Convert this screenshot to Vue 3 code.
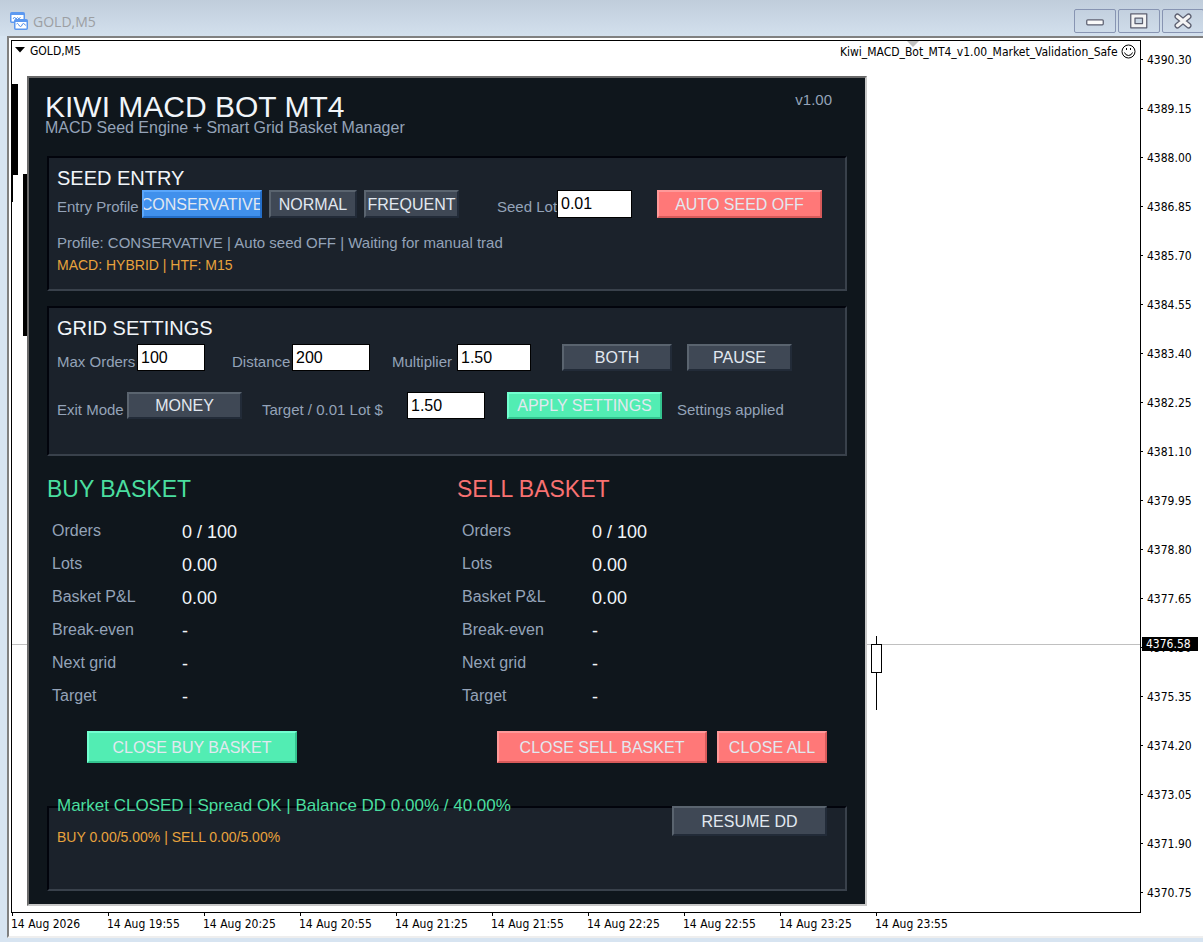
<script setup>
import { ref } from 'vue'

const prices = [
  '4390.30', '4389.15', '4388.00', '4386.85', '4385.70', '4384.55',
  '4383.40', '4382.25', '4381.10', '4379.95', '4378.80', '4377.65',
  '4376.50', '4375.35', '4374.20', '4373.05', '4371.90', '4370.75',
]
const times = [
  '14 Aug 2026', '14 Aug 19:55', '14 Aug 20:25', '14 Aug 20:55', '14 Aug 21:25',
  '14 Aug 21:55', '14 Aug 22:25', '14 Aug 22:55', '14 Aug 23:25', '14 Aug 23:55',
]
const stats = [
  ['Orders', '0 / 100'],
  ['Lots', '0.00'],
  ['Basket P&L', '0.00'],
  ['Break-even', '-'],
  ['Next grid', '-'],
  ['Target', '-'],
]
const seedLot = ref('0.01')
const maxOrders = ref('100')
const distance = ref('200')
const multiplier = ref('1.50')
const target = ref('1.50')
</script>

<template>
  <div class="window">
    <header class="titlebar">
      <svg class="app-icon" width="18" height="18" viewBox="0 0 18 18" aria-hidden="true">
        <rect x="0.75" y="0.75" width="13.500" height="9.500" rx="1" fill="#fff" stroke="#5b98f0" stroke-width="1.500" />
        <path d="M1 1h13v2H1z" fill="#5b98f0" />
        <path d="M3 7l1.500-2L6 7l1.500-1.500L9 7l1.500-2" fill="none" stroke="#5b98f0" />
        <rect x="4.75" y="7.75" width="12.500" height="9.500" rx="1" fill="#fff" stroke="#5b98f0" stroke-width="1.500" />
        <path d="M5 8h12v2H5z" fill="#5b98f0" />
        <path d="M6.500 12q1-1.500 2 .5t2 2q1 0 1.500-1.500t1.500-1.500q1 0 2 2" fill="none" stroke="#4f8ce8" />
      </svg>
      <span class="title">GOLD,M5</span>
      <div class="controls">
        <button type="button" aria-label="Minimize">
          <svg width="18" height="16" viewBox="0 0 18 16"><rect x="0.75" y="6.75" width="16.500" height="5" rx="1" fill="#fafafa" stroke="#5c5f70" stroke-width="1.250" /></svg>
        </button>
        <button type="button" aria-label="Maximize">
          <svg width="18" height="16" viewBox="0 0 18 16"><path d="M.75.75h16v14h-16zM5 5v5.500h7.500V5z" fill="#f4f4f4" fill-rule="evenodd" stroke="#5c5f70" stroke-width="1.250" stroke-linejoin="round" /></svg>
        </button>
        <button type="button" aria-label="Close">
          <svg width="18" height="16" viewBox="0 0 18 16" fill="none" stroke-linecap="round">
            <path d="M3.500 3.500l11 9M14.500 3.500l-11 9" stroke="#5c5f70" stroke-width="6" />
            <path d="M3.500 3.500l11 9M14.500 3.500l-11 9" stroke="#f4f4f4" stroke-width="3.500" />
          </svg>
        </button>
      </div>
    </header>

    <div class="frame">
      <div class="plot">
        <svg class="candles" aria-hidden="true">
          <path d="M0 603.500H1128" stroke="#c0c0c0" />
          <path d="M0 43h6v91H0zM0 134h1v27H0zM11 133h11v162H11z" fill="#000" />
          <path d="M864.500 595v74" stroke="#000" />
          <rect x="859.500" y="603.500" width="10" height="28" fill="#fff" stroke="#000" />
          <path d="M895 0h12l-6 6z" fill="#c0c0c0" />
        </svg>
        <div class="plot-head">
          <span class="symbol"><svg width="10" height="6" viewBox="0 0 10 6" aria-hidden="true"><path d="M0 0h10L5 5.500z" /></svg>GOLD,M5</span>
          <span class="expert">Kiwi_MACD_Bot_MT4_v1.00_Market_Validation_Safe
            <svg width="15" height="15" viewBox="0 0 15 15" aria-hidden="true">
              <circle cx="7.500" cy="7.500" r="6.500" fill="none" stroke="#000" />
              <path d="M5 4h1v2H5zM9 4h1v2H9z" />
              <path d="M3.500 8.500q1 3 4 3t4-3" fill="none" stroke="#000" />
            </svg>
          </span>
        </div>

        <main class="panel">
          <div class="panel-head">
            <div>
              <h1>KIWI MACD BOT MT4</h1>
              <p class="subtitle">MACD Seed Engine + Smart Grid Basket Manager</p>
            </div>
            <span class="version">v1.00</span>
          </div>

          <section class="box seed">
            <h2>SEED ENTRY</h2>
            <div class="row seed-row">
              <span class="label">Entry Profile</span>
              <div class="profiles">
                <button type="button" class="btn blue"><span>CONSERVATIVE</span></button>
                <button type="button" class="btn"><span>NORMAL</span></button>
                <button type="button" class="btn"><span>FREQUENT</span></button>
              </div>
              <label class="label" for="seed-lot">Seed Lot</label>
              <input id="seed-lot" v-model="seedLot" type="text" />
              <button type="button" class="btn red last"><span>AUTO SEED OFF</span></button>
            </div>
            <p class="note muted">Profile: CONSERVATIVE | Auto seed OFF | Waiting for manual trad</p>
            <p class="note amber">MACD: HYBRID | HTF: M15</p>
          </section>

          <section class="box grid-settings">
            <h2>GRID SETTINGS</h2>
            <div class="row orders-row">
              <label class="label" for="max-orders">Max Orders</label>
              <input id="max-orders" v-model="maxOrders" type="text" />
              <label class="label next" for="distance">Distance</label>
              <input id="distance" v-model="distance" type="text" />
              <label class="label next" for="multiplier">Multiplier</label>
              <input id="multiplier" v-model="multiplier" type="text" />
              <button type="button" class="btn both"><span>BOTH</span></button>
              <button type="button" class="btn pause"><span>PAUSE</span></button>
            </div>
            <div class="row exit-row">
              <span class="label">Exit Mode</span>
              <button type="button" class="btn"><span>MONEY</span></button>
              <label class="label target" for="target">Target / 0.01 Lot $</label>
              <input id="target" v-model="target" type="text" />
              <button type="button" class="btn green apply"><span>APPLY SETTINGS</span></button>
              <span class="label applied">Settings applied</span>
            </div>
          </section>

          <div class="baskets">
            <section>
              <h3 class="buy">BUY BASKET</h3>
              <dl>
                <div v-for="[name, value] in stats" :key="name"><dt>{{ name }}</dt><dd>{{ value }}</dd></div>
              </dl>
              <div class="actions">
                <button type="button" class="btn green"><span>CLOSE BUY BASKET</span></button>
              </div>
            </section>
            <section>
              <h3 class="sell">SELL BASKET</h3>
              <dl>
                <div v-for="[name, value] in stats" :key="name"><dt>{{ name }}</dt><dd>{{ value }}</dd></div>
              </dl>
              <div class="actions">
                <button type="button" class="btn red"><span>CLOSE SELL BASKET</span></button>
                <button type="button" class="btn red"><span>CLOSE ALL</span></button>
              </div>
            </section>
          </div>

          <section class="box status">
            <p class="market">Market CLOSED | Spread OK | Balance DD 0.00% / 40.00%</p>
            <p class="note amber">BUY 0.00/5.00% | SELL 0.00/5.00%</p>
            <button type="button" class="btn resume"><span>RESUME DD</span></button>
          </section>
        </main>
      </div>

      <div class="price-axis">
        <span v-for="p in prices" :key="p">{{ p }}</span>
        <strong class="price-tag">4376.58</strong>
      </div>
      <div class="time-axis">
        <span v-for="t in times" :key="t">{{ t }}</span>
      </div>
    </div>
  </div>
</template>

<style>
body {
  margin: 0;
  background: #d7e4f1;
}
</style>

<style scoped>
* {
  box-sizing: border-box;
}
h1, h2, h3, p, dl, dd {
  margin: 0;
  font-weight: 400;
}
.window {
  min-height: 100vh;
  overflow: hidden;
  padding: 0 0 4px 7px;
  background: #d7e4f1;
  font-family: "DejaVu Sans Condensed", "DejaVu Sans", "Noto Sans", sans-serif;
  font-size: 12px;
  color: #000;
}
.titlebar {
  display: flex;
  align-items: center;
  height: 36px;
  margin-left: -7px;
  padding: 6px 0 0 10px;
  background: linear-gradient(#c0cddb, #d3e0ed);
}
.title {
  flex: 1;
  margin-left: 5px;
  font-family: "Open Sans", "Noto Sans", sans-serif;
  font-size: 14px;
  color: #9c9fa3;
}
.controls {
  display: flex;
  gap: 2px;
  margin-right: -1px;
}
.controls button {
  display: grid;
  place-items: center;
  width: 42px;
  height: 24px;
  padding: 0;
  border: 1px solid #8794b2;
  border-radius: 2px;
  background: linear-gradient(#c3d0df, #cedbe9);
}
.frame {
  display: grid;
  grid-template-columns: 1fr 62px;
  padding: 2px 0 0 2px;
  border: 2px solid #808080;
  border-right: 0;
  border-bottom: 2px solid #eee;
  background: #fff;
}
.plot {
  position: relative;
  padding: 0 0 6px 15px;
  border: 1px solid #000;
}
.candles {
  position: absolute;
  inset: 0;
  width: 100%;
  height: 100%;
}
.plot-head {
  position: relative;
  display: flex;
  justify-content: space-between;
  height: 35px;
  margin-left: -12px;
  padding: 2px 4px 0 0;
  line-height: 16px;
}
.symbol svg {
  margin-right: 5px;
  vertical-align: 2px;
}
.expert {
  padding-top: 1px;
}
.expert svg {
  vertical-align: -3px;
}
.panel {
  position: relative;
  max-width: 840px;
  padding: 18px 18px 13px;
  border: 2px solid;
  border-color: #696969 #c8c8c8 #c8c8c8 #696969;
  background: #0f161c;
  font-family: "Liberation Sans", Arial, sans-serif;
  font-size: 15px;
  color: #94a3b8;
}
.panel-head {
  display: flex;
  justify-content: space-between;
  height: 60px;
  padding: 0 15px 0 0;
  margin-left: -2px;
}
h1 {
  margin-bottom: 1px;
  font-size: 30px;
  line-height: 22px;
  color: #f1f5f9;
}
.subtitle {
  font-size: 16px;
  line-height: 18px;
}
.version {
  line-height: 8px;
}
.box {
  position: relative;
  padding: 9px 8px 13px;
  border: 2px solid;
  border-color: #02040c #39414b #39414b #02040c;
  background: #1b222b;
}
h2 {
  margin-bottom: 1px;
  font-size: 20px;
  line-height: 22px;
  color: #f1f5f9;
}
.row {
  display: flex;
  white-space: nowrap;
}
.seed-row {
  height: 28px;
}
.label {
  padding-top: 8px;
  line-height: 20px;
}
.seed-row .label {
  padding-top: 7px;
}
.seed-row > .label:first-child {
  width: 85px;
}
.profiles {
  display: grid;
  grid-template-columns: 120px 88px 95px;
  gap: 7px;
  margin-right: 38px;
}
.seed-row label {
  width: 60px;
}
#seed-lot {
  width: 75px;
}
.seed-row .last {
  width: 165px;
  margin-left: 25px;
}
.btn {
  display: flex;
  align-items: center;
  justify-content: center;
  overflow: hidden;
  padding: 1px 0 0;
  border: 2px solid;
  border-color: #5a646f #222b38 #222b38 #5a646f;
  background: #3f4855;
  font-family: inherit;
  font-size: 16px;
  white-space: nowrap;
  color: #e2e8f0;
}
.blue {
  border-color: #5aa6fb #246fca #246fca #5aa6fb;
  background: #4090ec;
}
.red {
  border-color: #ff9999 #d85a5a #d85a5a #ff9999;
  background: #ff7878;
}
.green {
  border-color: #72ffd0 #34c48f #34c48f #72ffd0;
  background: #52edb3;
}
input {
  min-width: 0;
  padding: 0 3px;
  border: 1px solid #000;
  border-radius: 0;
  background: #fff;
  font-family: inherit;
  font-size: 16px;
  color: #000;
}
.note {
  line-height: 22px;
}
.note.muted {
  margin-top: 14px;
}
.amber {
  font-size: 14px;
  color: #e8a33d;
}
.grid-settings {
  margin-top: 15px;
  padding-bottom: 35px;
}
.orders-row {
  height: 27px;
  margin-top: 4px;
}
.grid-settings h2 {
  margin-bottom: 5px;
}
.grid-settings .orders-row {
  margin-top: 0;
}
.orders-row .label:first-child {
  width: 80px;
}
#max-orders {
  width: 68px;
}
.orders-row .next {
  width: 60px;
  margin-left: 27px;
}
#distance, #target {
  width: 78px;
}
.orders-row .next[for="multiplier"] {
  width: 65px;
  margin-left: 22px;
}
#multiplier {
  width: 74px;
}
.both {
  width: 110px;
  margin-left: 31px;
}
.pause {
  width: 105px;
  margin-left: 15px;
}
.exit-row {
  height: 27px;
  margin-top: 21px;
}
.exit-row .label:first-child {
  width: 70px;
}
.exit-row .btn {
  width: 115px;
}
.exit-row .target {
  width: 145px;
  margin-left: 20px;
}
.exit-row .apply {
  width: 155px;
  margin-left: 22px;
}
.applied {
  margin-left: 15px;
}
.baskets {
  display: grid;
  grid-template-columns: 1fr 1fr;
  gap: 20px;
  margin-top: 20px;
}
h3 {
  font-size: 23px;
  line-height: 26px;
}
.buy {
  color: #4ade9f;
}
.sell {
  color: #f87171;
}
dl {
  margin: 12px 0 19px 5px;
}
dl div {
  display: grid;
  grid-template-columns: 130px 1fr;
  line-height: 33px;
}
dt {
  font-size: 16px;
}
dd {
  padding-top: 2px;
  height: 33px;
  font-size: 18px;
  color: #f1f5f9;
}
.actions {
  display: grid;
  grid-template-columns: 210px 110px;
  gap: 10px;
  height: 32px;
  margin-left: 40px;
}
.status {
  height: 85px;
  margin-top: 43px;
}
.market {
  margin-top: -21px;
  font-size: 17px;
  line-height: 20px;
  color: #4ade9f;
}
.status .note {
  margin-top: 10px;
}
.resume {
  position: absolute;
  top: -2px;
  right: 18px;
  width: 155px;
  height: 30px;
}
.price-axis {
  position: relative;
  margin: -5px 0;
}
.price-axis span {
  display: flex;
  align-items: center;
  gap: 4px;
  height: 49px;
}
.price-axis span::before {
  content: "";
  width: 2px;
  height: 1px;
  background: #000;
}
.price-tag {
  position: absolute;
  top: 602px;
  left: 1px;
  width: 56px;
  padding-left: 4px;
  background: #000;
  font-weight: 400;
  line-height: 14px;
  color: #fff;
}
.time-axis {
  display: flex;
  height: 23px;
  white-space: nowrap;
}
.time-axis span {
  position: relative;
  flex: none;
  width: 96px;
  line-height: 22px;
}
.time-axis span::before {
  content: "";
  position: absolute;
  top: 0;
  left: 1px;
  width: 1px;
  height: 3px;
  background: #000;
}
</style>
